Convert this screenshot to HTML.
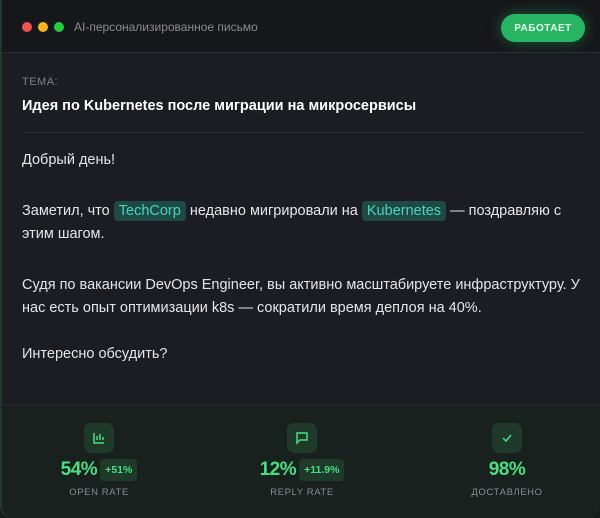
<!DOCTYPE html>
<html><head><meta charset="utf-8"><style>
*{box-sizing:border-box;margin:0;padding:0}
body{width:600px;height:518px;background:#141d1a;font-family:"Liberation Sans","Noto Sans CJK SC",sans-serif;overflow:hidden;position:relative}
.card{position:absolute;left:0;top:0;width:600px;height:518px;border-left:2px solid #1f3a2c;border-radius:0 0 12px 12px;overflow:hidden;background:#1b1d22}
.hdr{position:absolute;left:0;top:0;width:600px;height:53px;background:#16171b;border-bottom:1px solid #2a2c33}
.dot{position:absolute;top:22px;width:10px;height:10px;border-radius:50%}
.title{position:absolute;left:72px;top:20px;color:#8a8b94;font-size:12px}
.btn{position:absolute;left:499px;top:14px;width:84px;height:28px;border-radius:14px;background:#27b563;color:#e8fff0;font-size:10px;font-weight:bold;display:flex;align-items:center;justify-content:center;letter-spacing:.5px;box-shadow:0 0 14px rgba(39,181,99,.45)}
.t{position:absolute;left:20px;color:#e6e6ea;font-size:14.5px}
.tag{background:#1e4a45;color:#4fd1c0;border-radius:4px;padding:2px 5px}
.stats{position:absolute;left:0;top:404px;width:600px;height:114px;background:#19211f;border-top:2px solid #23252d}
.st{position:absolute;top:0;width:200px;text-align:center}
.ic{position:absolute;top:17px;width:30px;height:30px;border-radius:7px;background:#1f3a2a;left:85px}
.val{position:absolute;top:53px;left:0;width:200px;text-align:center;font-size:19px;font-weight:bold;color:#4ade80;letter-spacing:-.5px}
.badge{display:inline-block;background:#1f3a2a;color:#4ade80;font-size:10.5px;padding:5px 5px;border-radius:4px;vertical-align:2px;margin-left:3px;letter-spacing:0}
.lbl{position:absolute;top:81px;left:0;width:200px;text-align:center;font-size:9.5px;color:#8a8c95;letter-spacing:.6px}
</style></head><body>
<div class="card">
<div class="hdr">
<div class="dot" style="left:20px;background:#ef5350"></div>
<div class="dot" style="left:36px;background:#f5b324"></div>
<div class="dot" style="left:52px;background:#27c93f"></div>
<div class="title">AI-персонализированное письмо</div>
<div class="btn">РАБОТАЕТ</div>
</div>
<div class="t" style="top:76px;font-size:11px;color:#7e808a;letter-spacing:.5px">ТЕМА:</div>
<div class="t" style="top:98px;font-weight:bold;font-size:14.5px;color:#fff">Идея по Kubernetes после миграции на микросервисы</div>
<div style="position:absolute;left:20px;top:132px;width:564px;height:1px;background:#2a2c33"></div>
<div class="t" style="top:152px">Добрый день!</div>
<div class="t" style="top:200px;line-height:23px">Заметил, что <span class="tag">TechCorp</span> недавно мигрировали на <span class="tag">Kubernetes</span> — поздравляю с<br>этим шагом.</div>
<div class="t" style="top:274px;line-height:23px">Судя по вакансии DevOps Engineer, вы активно масштабируете инфраструктуру. У<br>нас есть опыт оптимизации k8s — сократили время деплоя на 40%.</div>
<div class="t" style="top:346px">Интересно обсудить?</div>
<div class="stats">
<div class="st" style="left:-3px">
<div class="ic"><svg width="30" height="30" viewBox="0 0 30 30" fill="none" stroke="#4ade80" stroke-width="1.5"><path d="M10 10v10h10M13 17v-4M16 17v-6M19 17v-3"/></svg></div>
<div class="val">54%<span class="badge">+51%</span></div>
<div class="lbl">OPEN RATE</div></div>
<div class="st" style="left:200px">
<div class="ic"><svg width="30" height="30" viewBox="0 0 30 30" fill="none" stroke="#4ade80" stroke-width="1.5"><path d="M10 10h10v7h-7l-3 3z"/></svg></div>
<div class="val">12%<span class="badge">+11.9%</span></div>
<div class="lbl">REPLY RATE</div></div>
<div class="st" style="left:405px">
<div class="ic"><svg width="30" height="30" viewBox="0 0 30 30" fill="none" stroke="#4ade80" stroke-width="1.5"><path d="M11 15l3 3 5-6"/></svg></div>
<div class="val">98%</div>
<div class="lbl">ДОСТАВЛЕНО</div></div>
</div>
</div>
</body></html>
